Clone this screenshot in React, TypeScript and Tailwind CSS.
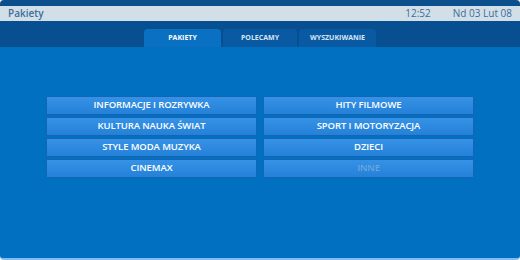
import { Fragment } from "react"

const left = ["INFORMACJE I ROZRYWKA", "KULTURA NAUKA ŚWIAT", "STYLE MODA MUZYKA", "CINEMAX"]
const right = ["HITY FILMOWE", "SPORT I MOTORYZACJA", "DZIECI", "INNE"]

const Btn = ({ label, disabled }: { label: string; disabled?: boolean }) => (
  <div
    className={`h-[19px] flex items-center justify-center border border-[#1565b5] rounded-[1px] bg-gradient-to-b from-[#3592e6] to-[#2581d8] text-[9.5px] font-semibold tracking-[-0.1px] ${
      disabled ? "text-[#6aa6dc]" : "text-white"
    }`}
  >
    {label}
  </div>
)

export default function App() {
  return (
    <div className="w-[520px] h-[260px] bg-white font-['Open_Sans',sans-serif] flex flex-col">
      <div className="h-[6px] bg-[#0b4f8c] rounded-tl-[4px] rounded-tr-[4px]" />
      <div className="h-[15px] bg-[#d2dfe7] flex items-center px-[8px] text-[10px] text-[#3c6d9b]">
        <span className="font-semibold">Pakiety</span>
        <span className="ml-auto mr-[22px]">12:52</span>
        <span>Nd 03 Lut 08</span>
      </div>
      <div className="h-[26px] bg-[#084f91] flex items-end pl-[144px] gap-[2px]">
        <div className="w-[77px] h-[18px] bg-[#0a70c2] rounded-t-[4px] flex items-center justify-center text-[7px] font-bold text-white">
          PAKIETY
        </div>
        <div className="w-[74px] h-[18px] bg-[#0a5aa3] rounded-t-[4px] flex items-center justify-center text-[7px] font-bold text-[#d8e6f3]">
          POLECAMY
        </div>
        <div className="w-[77px] h-[18px] bg-[#0a5aa3] rounded-t-[4px] flex items-center justify-center text-[7px] font-bold text-[#d8e6f3]">
          WYSZUKIWANIE
        </div>
      </div>
      <div className="flex-1 bg-[#0270c1] rounded-b-[4px] border-b-[2px] border-[#7fbdf0] pt-[49px] px-[46px]">
        <div className="grid grid-cols-2 gap-x-[6px] gap-y-[2px]">
          {left.map((l, i) => (
            <Fragment key={l}>
              <Btn label={l} />
              <Btn label={right[i]} disabled={i === 3} />
            </Fragment>
          ))}
        </div>
      </div>
    </div>
  )
}
